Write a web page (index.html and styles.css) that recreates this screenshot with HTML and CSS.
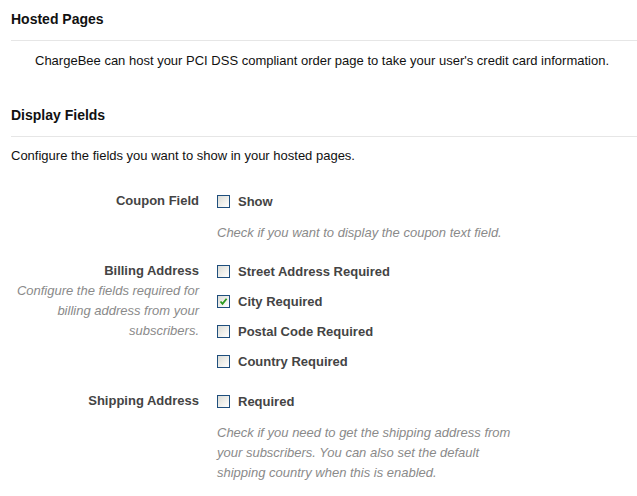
FILE: index.html
```html
<!DOCTYPE html>
<html>
<head>
<meta charset="utf-8">
<link rel="stylesheet" href="styles.css">
</head>
<body>
<div class="page">
  <h2 class="section-title first">Hosted Pages</h2>
  <p class="intro">ChargeBee can host your PCI DSS compliant order page to take your user's credit card information.</p>

  <h2 class="section-title">Display Fields</h2>
  <p class="lead">Configure the fields you want to show in your hosted pages.</p>

  <div class="field has-help">
    <div class="field-label">
      <div class="label">Coupon Field</div>
    </div>
    <div class="field-body">
      <label class="option"><span class="cb"></span><span>Show</span></label>
      <div class="help">Check if you want to display the coupon text field.</div>
    </div>
  </div>

  <div class="field">
    <div class="field-label">
      <div class="label">Billing Address</div>
      <div class="label-desc">Configure the fields required for billing address from your subscribers.</div>
    </div>
    <div class="field-body">
      <label class="option"><span class="cb"></span><span>Street Address Required</span></label>
      <label class="option"><span class="cb checked"><svg viewBox="0 0 13 13" width="13" height="13"><path d="M3.5 6.5 L5.5 8.8 L9.6 3.8" fill="none" stroke="#2a9a1e" stroke-width="1.8"/></svg></span><span>City Required</span></label>
      <label class="option"><span class="cb"></span><span>Postal Code Required</span></label>
      <label class="option"><span class="cb"></span><span>Country Required</span></label>
    </div>
  </div>

  <div class="field has-help">
    <div class="field-label">
      <div class="label">Shipping Address</div>
    </div>
    <div class="field-body">
      <label class="option"><span class="cb"></span><span>Required</span></label>
      <div class="help">Check if you need to get the shipping address from your subscribers. You can also set the default shipping country when this is enabled.</div>
    </div>
  </div>
</div>
</body>
</html>
```

FILE: styles.css
```css
html, body {
  margin: 0;
  padding: 0;
  background: #ffffff;
}
body {
  font-family: "Liberation Sans", Arial, sans-serif;
  font-size: 13px;
  color: #222;
}
.page {
  padding-left: 11px;
}
.section-title {
  margin: 0;
  font-size: 14px;
  font-weight: bold;
  line-height: 20px;
  color: #111;
  padding: 0 0 11px;
  border-bottom: 1px solid #e6e6e6;
}
.section-title.first {
  padding-top: 9px;
}
.intro {
  margin: 10px 0 0;
  padding-left: 24px;
  line-height: 20px;
  font-size: 13px;
  color: #111;
}
.intro + .section-title {
  margin-top: 34px;
}
.lead {
  margin: 9px 0 25px;
  line-height: 20px;
  font-size: 13px;
  color: #111;
}
.field {
  display: grid;
  grid-template-columns: 188px 1fr;
  column-gap: 18px;
  margin-bottom: 20px;
}
.field.has-help {
  margin-bottom: 18px;
}
.field-label {
  text-align: right;
}
.label {
  font-weight: bold;
  font-size: 13px;
  line-height: 20px;
  color: #444;
}
.label-desc {
  font-style: italic;
  font-size: 13px;
  line-height: 20px;
  color: #8a8a8a;
}
.field-body {
  display: flex;
  flex-direction: column;
  gap: 10px;
}
.option {
  display: flex;
  align-items: center;
  gap: 8px;
  height: 20px;
  font-weight: bold;
  font-size: 13px;
  color: #444;
}
.cb {
  box-sizing: border-box;
  width: 13px;
  height: 13px;
  border: 1px solid #1f4f7e;
  background: linear-gradient(135deg, #dcdcd6 0%, #f2f2ee 60%, #ffffff 100%);
  display: inline-block;
  position: relative;
}
.cb svg {
  position: absolute;
  left: -1px;
  top: -1px;
}
.help {
  margin-top: 2px;
  font-style: italic;
  font-size: 13px;
  line-height: 20px;
  color: #8a8a8a;
  width: 300px;
}
```
